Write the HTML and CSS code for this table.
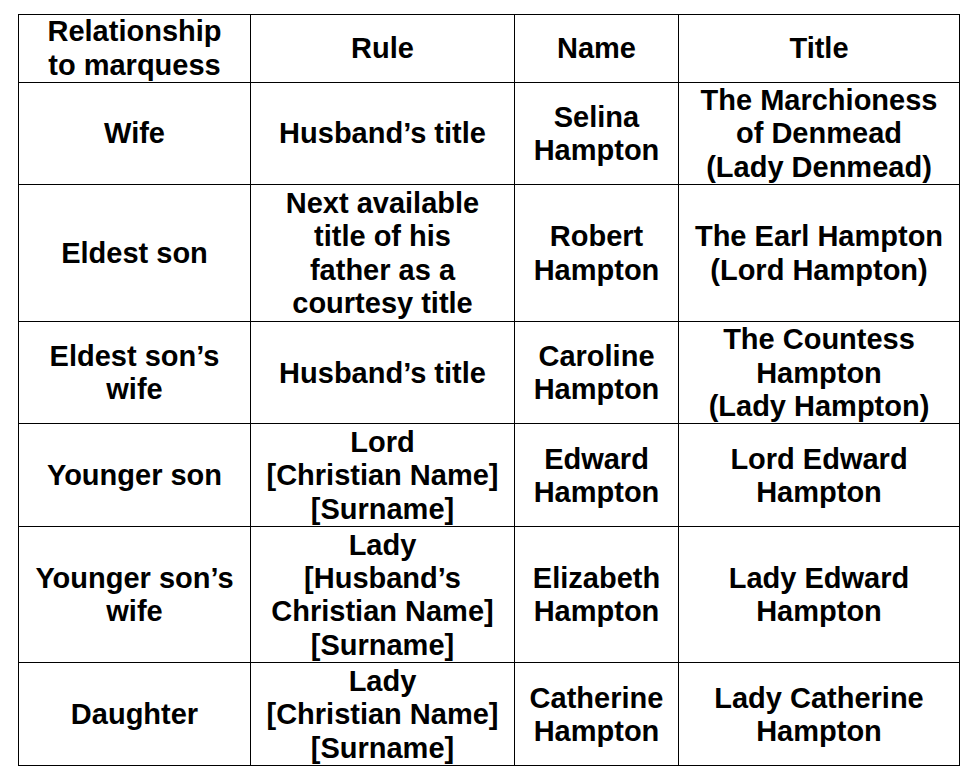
FILE: index.html
```html
<!DOCTYPE html>
<html lang="en">
<head>
<meta charset="utf-8">
<title>Courtesy titles</title>
<link rel="stylesheet" href="styles.css">
</head>
<body>
<table class="titles">
  <colgroup>
    <col class="c1"><col class="c2"><col class="c3"><col class="c4">
  </colgroup>
  <thead>
    <tr class="r-head">
      <th>Relationship<br>to marquess</th>
      <th>Rule</th>
      <th>Name</th>
      <th>Title</th>
    </tr>
  </thead>
  <tbody>
    <tr class="r3">
      <td>Wife</td>
      <td>Husband’s title</td>
      <td>Selina<br>Hampton</td>
      <td>The Marchioness<br>of Denmead<br>(Lady Denmead)</td>
    </tr>
    <tr class="r4">
      <td>Eldest son</td>
      <td>Next available<br>title of his<br>father as a<br>courtesy title</td>
      <td>Robert<br>Hampton</td>
      <td>The Earl Hampton<br>(Lord Hampton)</td>
    </tr>
    <tr class="r3">
      <td>Eldest son’s<br>wife</td>
      <td>Husband’s title</td>
      <td>Caroline<br>Hampton</td>
      <td>The Countess<br>Hampton<br>(Lady Hampton)</td>
    </tr>
    <tr class="r3b">
      <td>Younger son</td>
      <td>Lord<br>[Christian Name]<br>[Surname]</td>
      <td>Edward<br>Hampton</td>
      <td>Lord Edward<br>Hampton</td>
    </tr>
    <tr class="r4b">
      <td>Younger son’s<br>wife</td>
      <td>Lady<br>[Husband’s<br>Christian Name]<br>[Surname]</td>
      <td>Elizabeth<br>Hampton</td>
      <td>Lady Edward<br>Hampton</td>
    </tr>
    <tr class="r3b">
      <td>Daughter</td>
      <td>Lady<br>[Christian Name]<br>[Surname]</td>
      <td>Catherine<br>Hampton</td>
      <td>Lady Catherine<br>Hampton</td>
    </tr>
  </tbody>
</table>
</body>
</html>
```

FILE: styles.css
```css
html, body {
  margin: 0;
  background: #fff;
}

body {
  padding: 14px 0 0 18px;
  font-family: "Liberation Sans", Arial, sans-serif;
  color: #000;
}

.titles {
  border-collapse: collapse;
  table-layout: fixed;
  width: 941px;
  font-size: 29px;
  font-weight: bold;
  line-height: 33.4px;
}

.c1 { width: 232px; }
.c2 { width: 264px; }
.c3 { width: 164px; }
.c4 { width: 281px; }

.titles th,
.titles td {
  border: 1px solid #000;
  padding: 1px 0 0;
  text-align: center;
  vertical-align: middle;
  font-weight: bold;
}

.titles th {
  padding: 0;
}

.r-head { height: 68px; }
.r3 { height: 102px; }
.r3b { height: 103px; }
.r4 { height: 137px; }
.r4b { height: 136px; }
```
